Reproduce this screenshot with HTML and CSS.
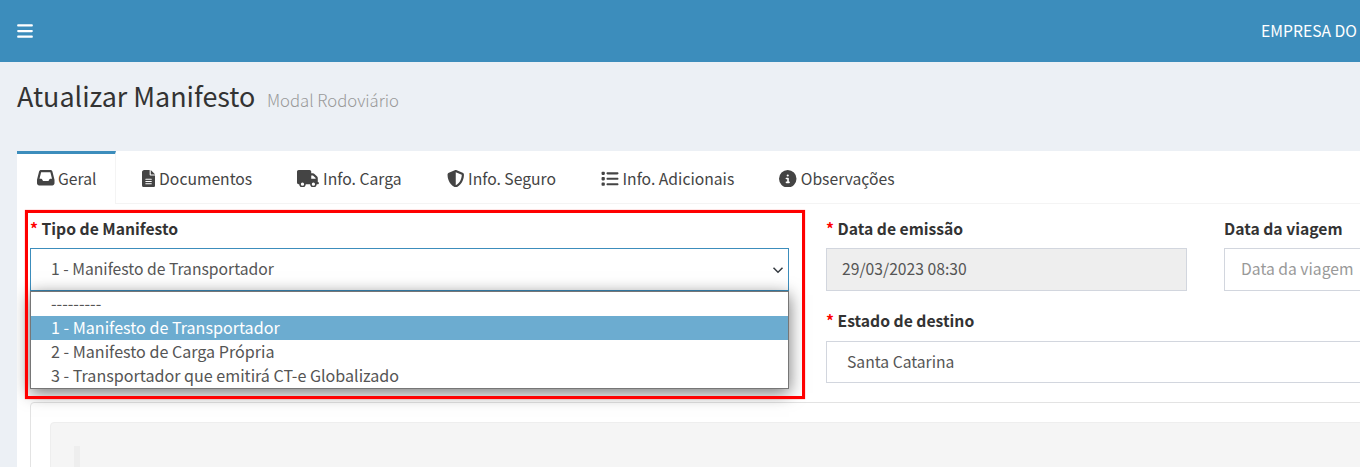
FILE: index.html
```html
<!DOCTYPE html>
<html lang="pt-BR">
<head>
<meta charset="utf-8">
<title>Atualizar Manifesto</title>
<link rel="stylesheet" href="styles.css">
</head>
<body>
<header class="topbar">
  <svg class="burger" viewBox="0 0 448 512"><path d="M0 96C0 78.3 14.3 64 32 64H416c17.7 0 32 14.3 32 32s-14.3 32-32 32H32C14.3 128 0 113.7 0 96zM0 256c0-17.7 14.3-32 32-32H416c17.7 0 32 14.3 32 32s-14.3 32-32 32H32c-17.7 0-32-14.3-32-32zM448 416c0 17.7-14.3 32-32 32H32c-17.7 0-32-14.3-32-32s14.3-32 32-32H416c17.7 0 32 14.3 32 32z"/></svg>
  <span class="company">EMPRESA DO</span>
</header>
<main class="content">
  <div class="heading">
    <h1 class="title">Atualizar Manifesto</h1>
    <small class="subtitle">Modal Rodoviário</small>
  </div>
  <section class="panel">
    <nav class="tabs">
      <a class="tab tab-active"><svg class="ico" viewBox="0 0 512 512"><path d="M121 32C91.6 32 66 52 58.9 80.5L1.9 308.4C.6 313.5 0 318.7 0 323.9V416c0 35.3 28.7 64 64 64H448c35.3 0 64-28.7 64-64V323.9c0-5.2-.6-10.4-1.9-15.5l-57-227.9C446 52 420.4 32 391 32H121zm0 64H391l48 192H387.8c-12.1 0-23.2 6.8-28.6 17.7l-14.3 28.6c-5.4 10.8-16.5 17.7-28.6 17.7H195.8c-12.1 0-23.2-6.8-28.6-17.7l-14.3-28.6c-5.4-10.8-16.5-17.7-28.6-17.7H73L121 96z"/></svg>Geral</a>
      <a class="tab"><svg class="ico" viewBox="0 0 384 512"><path d="M64 0C28.7 0 0 28.7 0 64V448c0 35.3 28.7 64 64 64H320c35.3 0 64-28.7 64-64V160H256c-17.7 0-32-14.3-32-32V0H64zM256 0V128H384L256 0zM112 256H272c8.8 0 16 7.2 16 16s-7.2 16-16 16H112c-8.8 0-16-7.2-16-16s7.2-16 16-16zm0 64H272c8.8 0 16 7.2 16 16s-7.2 16-16 16H112c-8.8 0-16-7.2-16-16s7.2-16 16-16zm0 64H272c8.8 0 16 7.2 16 16s-7.2 16-16 16H112c-8.8 0-16-7.2-16-16s7.2-16 16-16z"/></svg>Documentos</a>
      <a class="tab"><svg class="ico" viewBox="0 0 640 512"><path d="M48 0C21.5 0 0 21.5 0 48V368c0 26.5 21.5 48 48 48H64c0 53 43 96 96 96s96-43 96-96H384c0 53 43 96 96 96s96-43 96-96h32c17.7 0 32-14.3 32-32s-14.3-32-32-32V288 256 237.3c0-17-6.7-33.3-18.7-45.3L512 114.7c-12-12-28.3-18.7-45.3-18.7H416V48c0-26.5-21.5-48-48-48H48zM416 160h50.7L544 237.3V256H416V160zM112 416a48 48 0 1 1 96 0 48 48 0 1 1 -96 0zm368-48a48 48 0 1 1 0 96 48 48 0 1 1 0-96z"/></svg>Info. Carga</a>
      <a class="tab"><svg class="ico" viewBox="0 0 512 512"><path d="M256 0c4.6 0 9.2 1 13.4 2.9L457.7 82.8c22 9.3 38.4 31 38.3 57.2c-.5 99.2-41.3 280.7-213.6 363.2c-16.7 8-36.1 8-52.8 0C57.3 420.7 16.5 239.2 16 140c-.1-26.2 16.3-47.9 38.3-57.2L242.7 2.9C246.8 1 251.4 0 256 0zm0 66.8V444.8C394 378 431.1 230.1 432 141.4L256 66.8l0 0z"/></svg>Info. Seguro</a>
      <a class="tab"><svg class="ico" viewBox="0 0 512 512"><path d="M40 48C26.7 48 16 58.7 16 72v48c0 13.3 10.7 24 24 24H88c13.3 0 24-10.7 24-24V72c0-13.3-10.7-24-24-24H40zM192 64c-17.7 0-32 14.3-32 32s14.3 32 32 32H480c17.7 0 32-14.3 32-32s-14.3-32-32-32H192zm0 160c-17.7 0-32 14.3-32 32s14.3 32 32 32H480c17.7 0 32-14.3 32-32s-14.3-32-32-32H192zm0 160c-17.7 0-32 14.3-32 32s14.3 32 32 32H480c17.7 0 32-14.3 32-32s-14.3-32-32-32H192zM16 232v48c0 13.3 10.7 24 24 24H88c13.3 0 24-10.7 24-24V232c0-13.3-10.7-24-24-24H40c-13.3 0-24 10.7-24 24zM40 368c-13.3 0-24 10.7-24 24v48c0 13.3 10.7 24 24 24H88c13.3 0 24-10.7 24-24V392c0-13.3-10.7-24-24-24H40z"/></svg>Info. Adicionais</a>
      <a class="tab"><svg class="ico" viewBox="0 0 512 512"><path d="M256 512A256 256 0 1 0 256 0a256 256 0 1 0 0 512zM216 336h24V272H216c-13.3 0-24-10.7-24-24s10.7-24 24-24h48c13.3 0 24 10.7 24 24v88h8c13.3 0 24 10.7 24 24s-10.7 24-24 24H216c-13.3 0-24-10.7-24-24s10.7-24 24-24zm40-208a32 32 0 1 1 0 64 32 32 0 1 1 0-64z"/></svg>Observações</a>
    </nav>
    <div class="form">
      <div class="field-type">
        <label class="label"><span class="req">*</span> Tipo de Manifesto</label>
        <div class="select">
          <span>1 - Manifesto de Transportador</span>
          <svg class="chev" viewBox="0 0 16 16"><path d="M2 5l6 6 6-6" fill="none" stroke="#343a40" stroke-width="2"/></svg>
        </div>
        <ul class="dropdown">
          <li class="opt">---------</li>
          <li class="opt opt-on">1 - Manifesto de Transportador</li>
          <li class="opt">2 - Manifesto de Carga Própria</li>
          <li class="opt">3 - Transportador que emitirá CT-e Globalizado</li>
        </ul>
        <div class="highlight"></div>
      </div>
      <div class="field-date">
        <label class="label"><span class="req">*</span> Data de emissão</label>
        <div class="input input-off">29/03/2023 08:30</div>
      </div>
      <div class="field-trip">
        <label class="label">Data da viagem</label>
        <div class="input input-ph">Data da viagem</div>
      </div>
      <div class="field-state">
        <label class="label label-tight"><span class="req">*</span> Estado de destino</label>
        <div class="input input-state">Santa Catarina</div>
      </div>
    </div>
    <div class="card">
      <div class="well"><div class="quote"></div></div>
    </div>
  </section>
</main>
</body>
</html>
```
FILE: styles.css
```css
* { box-sizing: border-box; }
html, body { margin: 0; height: 467px; overflow: hidden; }
body {
  width: 1360px;
  background: #ecf0f5;
  color: #333;
  font-family: "Noto Sans CJK SC", "Liberation Sans", sans-serif;
  font-size: 15.7px;
}
.topbar {
  height: 62px;
  background: #3c8dbc;
  display: flex;
  align-items: center;
  justify-content: space-between;
  padding: 0 3px 2px 17px;
  color: #fff;
}
.burger { width: 16px; height: 18px; fill: #fff; margin-top: 1px; }
.company { font-size: 15.7px; }
.content { padding: 0 0 0 17px; }
.heading { height: 89px; display: flex; align-items: baseline; padding-top: 16px; gap: 11.5px; }
.title { margin: 0; font-size: 26.9px; font-weight: 400; line-height: 36px; color: #333; }
.subtitle { font-size: 16.7px; font-weight: 300; color: #999; }
.panel { background: #fff; height: 316px; overflow: hidden; }
.tabs { display: flex; height: 53px; border-bottom: 1px solid #f4f4f4; }
.tab {
  display: flex;
  align-items: center;
  gap: 4px;
  height: 52px;
  padding: 3px 20px 0;
  margin-right: 5px;
  color: #444;
}
.tab-active {
  height: 53px;
  border-top: 3px solid #3c8dbc;
  border-right: 1px solid #f4f4f4;
  background: #fff;
  gap: 3.5px;
  padding: 0 18.5px 2px 20px;
  margin-right: 6px;
}
.ico { height: 17.5px; width: auto; fill: #444; flex: none; }
.form {
  display: grid;
  grid-template-columns: 759px 361px 400px;
  column-gap: 37px;
  grid-template-rows: 93px 73px;
  padding: 13px 0 0 13px;
  width: 1600px;
}
.field-type { position: relative; grid-row: 1 / 3; }
.field-state { grid-column: 2 / 4; }
.label { display: block; height: 31px; line-height: 23px; font-weight: 700; color: #333; }
.label-tight { line-height: 21px; }
.req { color: #f00; }
.select {
  height: 43px;
  border: 1px solid #3c8dbc;
  display: flex;
  align-items: center;
  justify-content: space-between;
  padding: 0 4px 2px 20px;
  color: #555;
}
.chev { width: 12px; height: 12px; margin-top: 2px; }
.dropdown {
  list-style: none;
  margin: 0;
  padding: 0;
  position: absolute;
  left: 0;
  right: 0;
  top: 74px;
  background: #fff;
  border: 1px solid #767676;
  box-shadow: 0 4px 16px rgba(0,0,0,.55);
  z-index: 2;
  font-size: 16.1px;
}
.opt { height: 24px; line-height: 23px; padding-left: 20px; color: #555; }
.opt-on { background: #6cacd0; color: #fff; }
.highlight {
  position: absolute;
  left: -5px;
  right: -16px;
  top: -7px;
  height: 189px;
  border: 3px solid #f00;
  box-shadow: 0 0 1px rgba(255,0,0,.6);
  z-index: 3;
  pointer-events: none;
}
.input {
  height: 43px;
  border: 1px solid #d2d6de;
  padding: 0 15px 2px;
  display: flex;
  align-items: center;
  color: #555;
}
.input-off { background: #eee; }
.input-ph { color: #999; padding-left: 16px; }
.input-state { height: 42px; padding: 0 20px 2px; }
.card {
  margin: 19px 0 0 13px;
  width: 1500px;
  border: 1px solid #e3e3e3;
  border-radius: 4px 0 0 0;
  padding: 19px;
  height: 200px;
}
.well {
  background: #f5f5f5;
  border: 1px solid #eee;
  border-radius: 4px 0 0 0;
  height: 150px;
  padding: 23px 0 0 23px;
}
.quote { width: 6px; height: 40px; background: #eee; }
```
